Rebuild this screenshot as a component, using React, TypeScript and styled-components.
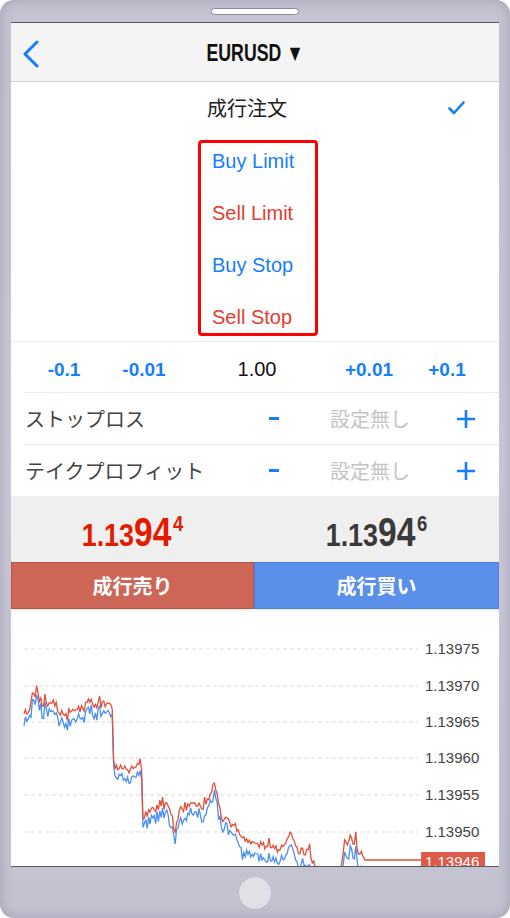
import React from "react";
import styled, { createGlobalStyle } from "styled-components";

const GlobalStyle = createGlobalStyle`
  html, body {
    margin: 0;
    padding: 0;
    background: #fff;
  }
  body {
    font-family: "Liberation Sans", Arial, sans-serif;
  }
`;

const JP = `"Noto Sans CJK JP", "Liberation Sans", sans-serif`;
const SANS = `"Liberation Sans", Arial, sans-serif`;
const BLUE = "#157efb";
const RED = "#e63b2e";

// chart data --------------------------------------------------------------
const rng = (seed: number) => () => {
  seed = (seed + 0x6d2b79f5) | 0;
  let t = Math.imul(seed ^ (seed >>> 15), 1 | seed);
  t = (t + Math.imul(t ^ (t >>> 7), 61 | t)) ^ t;
  return ((t ^ (t >>> 14)) >>> 0) / 4294967296;
};

const anchors: [number, number][] = [
  [24, 716], [28, 712], [33, 703], [37, 696], [42, 705], [55, 705], [60, 714],
  [68, 720], [75, 712], [85, 710], [88, 697], [92, 706], [100, 707], [108, 705],
  [112, 707], [114, 775], [120, 770], [130, 772], [138, 768], [141, 762],
  [143, 818], [150, 814], [160, 808], [170, 808], [175, 835], [180, 812],
  [190, 808], [205, 808], [211, 798], [214, 780], [218, 800], [222, 820],
  [235, 828], [245, 840], [255, 845], [265, 848], [280, 852], [292, 838],
  [296, 852], [310, 855], [316, 872], [340, 880], [344, 845], [350, 843],
  [356, 843], [359, 858], [362, 852], [365, 862],
];

const interp = (x: number) => {
  for (let i = 1; i < anchors.length; i++) {
    const [x1, y1] = anchors[i];
    const [x0, y0] = anchors[i - 1];
    if (x <= x1) return y0 + ((y1 - y0) * (x - x0)) / (x1 - x0);
  }
  return anchors[anchors.length - 1][1];
};

const buildLines = () => {
  const rand = rng(42);
  const red: string[] = [];
  const blue: string[] = [];
  for (let x = 24; x <= 364; x += 1.4) {
    let y = interp(x) + Math.round((rand() - 0.5) * 3) * 3;
    if (rand() < 0.1) y -= 6;
    const off = x > 240 ? 13 + (rand() - 0.5) * 6 : 9 + (rand() - 0.5) * 8;
    const dip = rand() < 0.08 ? 6 : 0;
    red.push(`${x.toFixed(1)},${y.toFixed(1)}`);
    blue.push(`${x.toFixed(1)},${(y + off + dip).toFixed(1)}`);
  }
  red.push("365,862", "421,862");
  blue.push("365,877", "421,877");
  return { red: red.join(" "), blue: blue.join(" ") };
};

const lines = buildLines();
const grid = [
  { y: 651, label: "1.13975" },
  { y: 688, label: "1.13970" },
  { y: 724, label: "1.13965" },
  { y: 760, label: "1.13960" },
  { y: 797, label: "1.13955" },
  { y: 834, label: "1.13950" },
];

// layout ------------------------------------------------------------------
const Phone = styled.div`
  width: 510px;
  height: 918px;
  box-sizing: border-box;
  border-radius: 14px;
  background: linear-gradient(180deg, #c4c4d2 0%, #c9c9d6 50%, #c2c2d0 100%);
  box-shadow: inset 0 0 14px rgba(120, 120, 150, 0.45);
  display: flex;
  flex-direction: column;
  padding: 0 11px;
`;

const TopBezel = styled.div`
  height: 22px;
  display: flex;
  justify-content: center;
  align-items: flex-start;
  padding-top: 8px;
  box-sizing: border-box;
`;

const Speaker = styled.div`
  width: 86px;
  height: 5px;
  border-radius: 4px;
  background: #fff;
  border: 1px solid #8a8a94;
`;

const BottomBezel = styled.div`
  height: 51px;
  display: flex;
  justify-content: center;
  align-items: center;
`;

const HomeButton = styled.div`
  width: 32px;
  height: 32px;
  border-radius: 50%;
  background: #e0e0e6;
  box-shadow: 0 0 1px rgba(0, 0, 0, 0.1);
`;

const Screen = styled.div`
  flex: 1;
  background: #fff;
  border-top: 1px solid #5a5a5e;
  border-bottom: 1px solid #5a5a5e;
  display: flex;
  flex-direction: column;
  overflow: hidden;
`;

const Header = styled.div`
  height: 58px;
  background: #f4f4f4;
  border-bottom: 1px solid #cfcfcf;
  display: grid;
  grid-template-columns: 60px 1fr 60px;
  align-items: center;
`;

const BackButton = styled.div`
  padding-left: 11px;
  display: flex;
  align-items: center;
  padding-top: 4px;
`;

const Title = styled.div`
  display: flex;
  justify-content: center;
  padding-top: 3px;
`;

const TitleText = styled.span`
  display: inline-block;
  font-family: ${SANS};
  font-weight: 700;
  font-size: 23px;
  color: #111;
  white-space: nowrap;
  transform: scaleX(0.77);
`;

const OrderSection = styled.div`
  display: flex;
  flex-direction: column;
  height: 259px;
`;

const MarketRow = styled.div`
  height: 50px;
  display: flex;
  align-items: center;
  padding-left: 196px;
  padding-right: 34px;
  font-family: ${JP};
  font-size: 20px;
  color: #222;
`;

const Check = styled.svg`
  margin-left: auto;
  margin-top: 2px;
`;

const TypeBox = styled.div`
  margin: 8px 0 0 187px;
  width: 103px;
  height: 190px;
  border: 3px solid #ff0000;
  border-radius: 4px;
  display: flex;
  flex-direction: column;
  gap: 18px;
  padding-left: 11px;
  box-sizing: content-box;
`;

const TypeItem = styled.div<{ $sell?: boolean }>`
  height: 34px;
  line-height: 36px;
  font-size: 20px;
  color: ${(p) => (p.$sell ? RED : BLUE)};
  white-space: nowrap;
`;

const LotRow = styled.div`
  height: 51px;
  border-top: 1px solid #ececec;
  display: grid;
  grid-template-columns: 106px 54px 172px 52px 1fr;
  align-items: center;
  justify-items: center;
  font-size: 19px;
  padding-top: 5px;
  box-sizing: border-box;
`;

const LotStep = styled.span`
  color: ${BLUE};
  font-weight: 700;
`;

const LotValue = styled.span`
  color: #111;
  font-size: 20px;
`;

const ParamRow = styled.div`
  height: 51px;
  margin-left: 13px;
  border-top: 1px solid #ececec;
  display: grid;
  grid-template-columns: 230px 40px 36px 106px 60px;
  align-items: center;
  font-family: ${JP};
  font-size: 20px;
`;

const ParamLabel = styled.span`
  color: #444;
  padding-left: 1px;
`;

const Minus = styled.div`
  width: 10px;
  height: 3px;
  background: ${BLUE};
  justify-self: center;
`;

const Unset = styled.span`
  color: #c4c4c4;
  grid-column: 4;
`;

const PlusIcon = styled.svg`
  justify-self: center;
`;

const PriceArea = styled.div`
  height: 66px;
  background: #efefef;
  display: grid;
  grid-template-columns: 243px 1fr;
  align-items: center;
`;

const PriceCell = styled.div`
  display: flex;
  justify-content: center;
  padding-top: 6px;
`;

const Price = styled.div<{ $bid?: boolean }>`
  display: inline-flex;
  align-items: baseline;
  font-family: ${SANS};
  font-weight: 700;
  color: ${(p) => (p.$bid ? "#e31a00" : "#3a3a3a")};
  transform: scaleX(0.84);
`;

const PriceSmall = styled.span`
  font-size: 32px;
`;

const PriceBig = styled.span`
  font-size: 40px;
`;

const PriceSup = styled.span`
  font-size: 22px;
  align-self: flex-start;
  margin-top: 1px;
  margin-left: 2px;
`;

const TradeButtons = styled.div`
  height: 47px;
  display: grid;
  grid-template-columns: 243px 1fr;
`;

const TradeButton = styled.div<{ $sell?: boolean }>`
  display: flex;
  align-items: center;
  justify-content: center;
  font-family: ${JP};
  font-size: 20px;
  font-weight: 700;
  color: #fff;
  background: ${(p) => (p.$sell ? "#cd6656" : "#5b90ea")};
  border: 1px solid ${(p) => (p.$sell ? "#b65444" : "#4a80e2")};
  box-sizing: border-box;
`;

const ChartArea = styled.div`
  flex: 1;
  border-top: 2px solid #f2f2f2;
  overflow: hidden;
`;

export default function App() {
  return (
    <>
      <GlobalStyle />
      <Phone>
        <TopBezel>
          <Speaker />
        </TopBezel>
        <Screen>
          <Header>
            <BackButton>
              <svg width="18" height="28" viewBox="0 0 18 28">
                <polyline
                  points="15,2 3,14 15,26"
                  fill="none"
                  stroke={BLUE}
                  strokeWidth="3"
                  strokeLinecap="round"
                  strokeLinejoin="round"
                />
              </svg>
            </BackButton>
            <Title>
              <TitleText>EURUSD ▼</TitleText>
            </Title>
            <div />
          </Header>

          <OrderSection>
            <MarketRow>
              成行注文
              <Check width="17" height="14" viewBox="0 0 17 14">
                <polyline
                  points="1.5,7.5 6,12 15.5,1.5"
                  fill="none"
                  stroke={BLUE}
                  strokeWidth="2.6"
                  strokeLinecap="round"
                  strokeLinejoin="round"
                />
              </Check>
            </MarketRow>
            <TypeBox>
              <TypeItem>Buy Limit</TypeItem>
              <TypeItem $sell>Sell Limit</TypeItem>
              <TypeItem>Buy Stop</TypeItem>
              <TypeItem $sell>Sell Stop</TypeItem>
            </TypeBox>
          </OrderSection>

          <LotRow>
            <LotStep>-0.1</LotStep>
            <LotStep>-0.01</LotStep>
            <LotValue>1.00</LotValue>
            <LotStep>+0.01</LotStep>
            <LotStep>+0.1</LotStep>
          </LotRow>

          {["ストップロス", "テイクプロフィット"].map((label) => (
            <ParamRow key={label}>
              <ParamLabel>{label}</ParamLabel>
              <Minus />
              <Unset>設定無し</Unset>
              <PlusIcon width="20" height="20" viewBox="0 0 20 20">
                <path d="M10 1v18M1 10h18" stroke={BLUE} strokeWidth="2.6" />
              </PlusIcon>
            </ParamRow>
          ))}

          <PriceArea>
            <PriceCell>
              <Price $bid>
                <PriceSmall>1.13</PriceSmall>
                <PriceBig>94</PriceBig>
                <PriceSup>4</PriceSup>
              </Price>
            </PriceCell>
            <PriceCell>
              <Price>
                <PriceSmall>1.13</PriceSmall>
                <PriceBig>94</PriceBig>
                <PriceSup>6</PriceSup>
              </Price>
            </PriceCell>
          </PriceArea>

          <TradeButtons>
            <TradeButton $sell>成行売り</TradeButton>
            <TradeButton>成行買い</TradeButton>
          </TradeButtons>

          <ChartArea>
            <svg width="488" height="255" viewBox="11 613 488 255">
              {grid.map((g) => (
                <g key={g.label}>
                  <line
                    x1="24"
                    x2="418"
                    y1={g.y}
                    y2={g.y}
                    stroke="#d9d9d9"
                    strokeDasharray="4 3"
                  />
                  <text
                    x="425"
                    y={g.y + 5}
                    fontSize="15"
                    fill="#444"
                    fontFamily="Liberation Sans, Arial, sans-serif"
                  >
                    {g.label}
                  </text>
                </g>
              ))}
              <line x1="24" x2="418" y1="870" y2="870" stroke="#d9d9d9" strokeDasharray="4 3" />
              <polyline points={lines.blue} fill="none" stroke="#4a90f0" strokeWidth="1.3" />
              <polyline points={lines.red} fill="none" stroke="#e0503c" strokeWidth="1.3" />
              <rect x="421" y="854" width="64" height="20" fill="#dd5b48" />
              <text
                x="425"
                y="869"
                fontSize="15"
                fill="#fff"
                fontFamily="Liberation Sans, Arial, sans-serif"
              >
                1.13946
              </text>
            </svg>
          </ChartArea>
        </Screen>
        <BottomBezel>
          <HomeButton />
        </BottomBezel>
      </Phone>
    </>
  );
}
